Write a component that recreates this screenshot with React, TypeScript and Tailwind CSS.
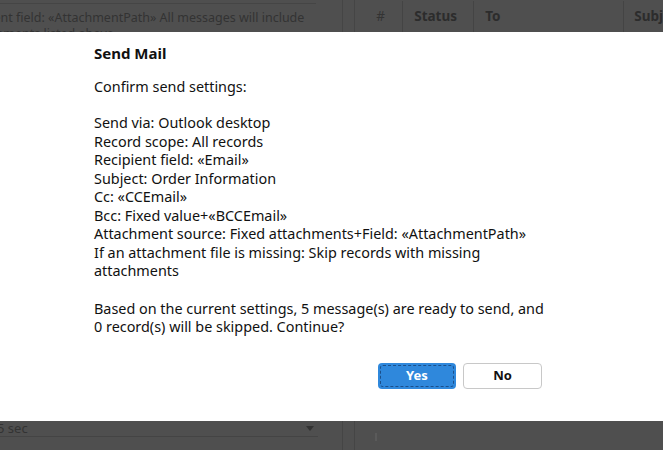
import React from "react";

export default function App() {
  const font = { fontFamily: '"Noto Sans", "Open Sans", Arial, sans-serif' };
  const lines = [
    "Send via: Outlook desktop",
    "Record scope: All records",
    "Recipient field: «Email»",
    "Subject: Order Information",
    "Cc: «CCEmail»",
    "Bcc: Fixed value+«BCCEmail»",
    "Attachment source: Fixed attachments+Field: «AttachmentPath»",
  ];
  return (
    <div className="relative h-[450px] w-[663px] overflow-hidden bg-[#4f4f4f]" style={font}>
      {/* background app (dimmed) */}
      <div className="flex h-full">
        <div className="flex w-[345px] flex-col justify-between">
          <div className="pt-[3px]">
            <div className="h-px w-[316px] bg-[#454545]" />
            <div className="ml-[-56px] w-[372px] pt-[6px] text-[12.5px] leading-[16px] text-[#333]">
              Attachment field: «AttachmentPath» All messages will include the attachments listed above.
            </div>
          </div>
          <div className="pb-[13px]">
            <div className="flex h-[16px] w-[322px] items-center">
              <div className="flex h-full w-[318px] items-center justify-between border-b border-[#444] pr-[4px] text-[13px] text-[#333]">
                <span className="ml-[-3px]">5 sec</span>
                <svg width="8" height="5" viewBox="0 0 8 5"><path d="M0 0h8L4 5z" fill="#333" /></svg>
              </div>
            </div>
          </div>
        </div>
        <div className="w-[13px] border-x border-[#454545]" />
        <div className="flex-1">
          <div className="flex h-[32px] pt-px text-[13.5px] font-bold text-[#2c2c2c]">
            <div className="flex w-[48px] items-center justify-center border-r border-[#444] pl-[4px] font-normal text-[#333]">#</div>
            <div className="flex w-[71px] items-center border-r border-[#444] pl-[11px]">Status</div>
            <div className="flex w-[150px] items-center border-r border-[#444] pl-[11px]">To</div>
            <div className="flex flex-1 items-center pl-[10px]">Subj</div>
          </div>
          <div className="ml-[10px] h-px bg-[#474747]" />
          <div className="ml-[20px] mt-[400px] h-[8px] w-[2px] bg-[#5a5a5a]" />
        </div>
      </div>

      {/* modal dialog */}
      <div className="absolute left-0 right-0 top-[32px] flex h-[389px] flex-col bg-white pl-[94px] pr-[40px] text-[#111]">
        <div className="pt-[11px] text-[15px] font-bold leading-[20px]">Send Mail</div>
        <div className="pt-[15px] text-[14.4px] leading-[18.5px]">
          <div>Confirm send settings:</div>
          <div className="h-[17.5px]" />
          {lines.map((l) => (
            <div key={l}>{l}</div>
          ))}
          <div className="w-[440px]">If an attachment file is missing: Skip records with missing attachments</div>
          <div className="h-[19px]" />
          <div className="w-[460px]">Based on the current settings, 5 message(s) are ready to send, and 0 record(s) will be skipped. Continue?</div>
        </div>
        <div className="mt-[26px] flex gap-[7px] pl-[284px]">
          <button className="flex h-[26px] w-[78px] items-center justify-center rounded-[4px] bg-[#2f88dc] p-[2px]">
            <span className="flex h-full w-full items-center justify-center rounded-[3px] border border-dashed border-[#1b4f8a] text-[13px] font-bold text-white">
              Yes
            </span>
          </button>
          <button className="flex h-[26px] w-[79px] items-center justify-center rounded-[4px] border border-[#c8c8c8] bg-white text-[13px] font-bold text-[#111]">
            No
          </button>
        </div>
      </div>
    </div>
  );
}
